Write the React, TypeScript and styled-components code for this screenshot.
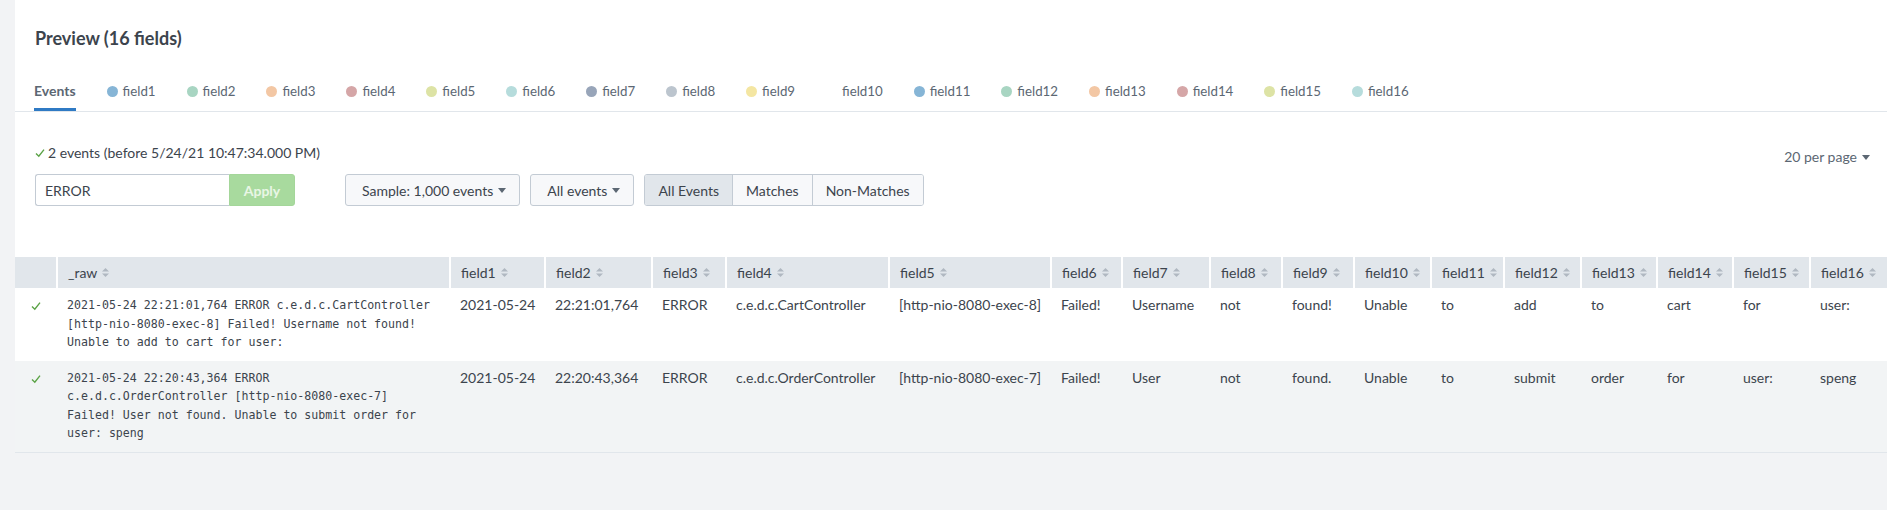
import React from "react";
import styled, { createGlobalStyle } from "styled-components";

const GlobalStyle = createGlobalStyle`
  html, body {
    margin: 0;
    padding: 0;
    background: #f2f3f5;
    font-family: Lato, "Open Sans", Arial, sans-serif;
    color: #3c444d;
  }
  * { box-sizing: border-box; }
`;

const Page = styled.div`
  min-height: 510px;
  background: #f2f3f5;
`;

const Panel = styled.div`
  margin-left: 15px;
  background: #ffffff;
`;

const Title = styled.h2`
  margin: 0;
  padding: 26px 20px 0;
  font-size: 18px;
  line-height: 24px;
  font-weight: 700;
  color: #3c444d;
`;

const TabBar = styled.div`
  display: flex;
  gap: 31px;
  margin-top: 31px;
  padding: 0 19px;
  border-bottom: 1px solid #e1e6eb;
`;

const Tab = styled.div<{ $active?: boolean }>`
  display: flex;
  align-items: center;
  gap: 5px;
  height: 30px;
  padding-bottom: 7px;
  font-size: ${(p) => (p.$active ? "14px" : "13.3px")};
  font-weight: ${(p) => (p.$active ? 700 : 400)};
  line-height: 20px;
  color: #5c6773;
  border-bottom: 3px solid ${(p) => (p.$active ? "#2f7ac4" : "transparent")};
`;

const Dot = styled.span<{ $color: string }>`
  width: 11px;
  height: 11px;
  border-radius: 50%;
  background: ${(p) => p.$color};
  flex: none;
`;

const Body = styled.div`
  padding: 31px 17px 0 20px;
`;

const StatusRow = styled.div`
  display: flex;
  justify-content: space-between;
  align-items: flex-start;
  height: 20px;
`;

const Status = styled.div`
  display: flex;
  align-items: center;
  gap: 3px;
  font-size: 14px;
  line-height: 20px;
  color: #3c444d;
`;

const PerPage = styled.div`
  display: flex;
  align-items: center;
  gap: 5px;
  margin-top: 4px;
  font-size: 14px;
  line-height: 20px;
  color: #5c6773;
`;

const Toolbar = styled.div`
  display: flex;
  align-items: center;
  margin-top: 11px;
  height: 32px;
`;

const SearchGroup = styled.div`
  display: flex;
  height: 32px;
  margin-right: 50px;
`;

const SearchInput = styled.input`
  width: 194px;
  height: 32px;
  border: 1px solid #c3cbd4;
  border-right: none;
  border-radius: 3px 0 0 3px;
  padding: 0 9px;
  font-family: inherit;
  font-size: 14px;
  color: #3c444d;
  background: #fff;
  outline: none;
`;

const ApplyButton = styled.button`
  width: 66px;
  height: 32px;
  border: 1px solid #a4d69a;
  border-radius: 0 3px 3px 0;
  background: #a8da9e;
  color: #e9f6e5;
  font-family: inherit;
  font-size: 14px;
  font-weight: 700;
  padding: 0;
`;

const DropButton = styled.button`
  display: flex;
  align-items: center;
  gap: 5px;
  height: 32px;
  margin-right: 10px;
  padding: 0 13px 0 16px;
  border: 1px solid #c3cbd4;
  border-radius: 3px;
  background: #f7f8fa;
  color: #3c444d;
  font-family: inherit;
  font-size: 14px;
`;

const Segmented = styled.div`
  display: flex;
  height: 32px;
  border: 1px solid #c3cbd4;
  border-radius: 3px;
  overflow: hidden;
`;

const SegButton = styled.button<{ $active?: boolean }>`
  height: 30px;
  padding: 0 13px;
  border: none;
  border-left: 1px solid #c3cbd4;
  background: ${(p) => (p.$active ? "#e1e6eb" : "#f7f8fa")};
  color: #3c444d;
  font-family: inherit;
  font-size: 14px;
  &:first-child { border-left: none; }
`;

const TableWrap = styled.div`
  margin-top: 51px;
`;

const Table = styled.table`
  width: 100%;
  border-collapse: collapse;
  table-layout: fixed;
`;

const Col = styled.col<{ $width: number }>`
  width: ${(p) => p.$width}px;
`;

const Th = styled.th`
  height: 31px;
  padding: 0 10px;
  background: #e1e6eb;
  border-left: 2px solid #ffffff;
  text-align: left;
  font-size: 14px;
  font-weight: 400;
  color: #3c444d;
  white-space: nowrap;
  &:first-child { border-left: none; }
`;

const HeadLabel = styled.span`
  display: inline-flex;
  align-items: center;
  gap: 5px;
`;

const Row = styled.tr<{ $alt?: boolean }>`
  background: ${(p) => (p.$alt ? "#f2f4f5" : "#ffffff")};
  &:last-child { border-bottom: 1px solid #e1e6eb; }
`;

const Td = styled.td`
  vertical-align: top;
  padding: 8px 10px 9px;
  font-size: 14px;
  line-height: 18.5px;
  color: #3c444d;
  white-space: nowrap;
`;

const CheckCell = styled.td`
  vertical-align: top;
  padding: 8px 0 0;
  text-align: center;
  line-height: 18.5px;
`;

const RawCell = styled.td`
  vertical-align: top;
  padding: 8px 10px 9px;
`;

const RawText = styled.div`
  max-width: 52.5ch;
  font-family: "DejaVu Sans Mono", "Liberation Mono", monospace;
  font-size: 11.6px;
  line-height: 18.5px;
  color: #3c444d;
  white-space: normal;
  word-break: normal;
`;

const Caret = () => (
  <svg width="8" height="5" viewBox="0 0 8 5" aria-hidden>
    <path d="M0 0 L8 0 L4 5 Z" fill="#5c6773" />
  </svg>
);

const SortIcon = () => (
  <svg width="7" height="9" viewBox="0 0 7 9" aria-hidden>
    <path d="M0 3.6 L3.5 0 L7 3.6 Z" fill="#b0b8c1" />
    <path d="M0 5.4 L3.5 9 L7 5.4 Z" fill="#b0b8c1" />
  </svg>
);

const CheckMark = ({ size = 10 }: { size?: number }) => (
  <svg width={size} height={size} viewBox="0 0 10 10" aria-hidden>
    <path d="M1 5.6 L3.8 8.2 L9 1.6" fill="none" stroke="#5ba346" strokeWidth="1.4" />
  </svg>
);

const fieldColors = [
  "#86b5d6",
  "#a8d5c2",
  "#f3c7a4",
  "#d5a6a7",
  "#dde3a5",
  "#b6dcdc",
  "#98a5b9",
  "#bcc5ce",
  "#f4e6a2",
  "transparent",
  "#86b5d6",
  "#a8d5c2",
  "#f3c7a4",
  "#d5a6a7",
  "#dde3a5",
  "#b6dcdc",
];

const colWidths = [42, 393, 95, 107, 74, 163, 162, 71, 88, 72, 72, 77, 73, 77, 76, 76, 77, 77];

const rows = [
  {
    raw: "2021-05-24 22:21:01,764 ERROR c.e.d.c.CartController [http-nio-8080-exec-8] Failed! Username not found! Unable to add to cart for user:",
    fields: [
      "2021-05-24",
      "22:21:01,764",
      "ERROR",
      "c.e.d.c.CartController",
      "[http-nio-8080-exec-8]",
      "Failed!",
      "Username",
      "not",
      "found!",
      "Unable",
      "to",
      "add",
      "to",
      "cart",
      "for",
      "user:",
    ],
  },
  {
    raw: "2021-05-24 22:20:43,364 ERROR c.e.d.c.OrderController [http-nio-8080-exec-7] Failed! User not found. Unable to submit order for user: speng",
    fields: [
      "2021-05-24",
      "22:20:43,364",
      "ERROR",
      "c.e.d.c.OrderController",
      "[http-nio-8080-exec-7]",
      "Failed!",
      "User",
      "not",
      "found.",
      "Unable",
      "to",
      "submit",
      "order",
      "for",
      "user:",
      "speng",
    ],
  },
];

const fieldNames = fieldColors.map((_, i) => `field${i + 1}`);

export default function App() {
  return (
    <>
      <GlobalStyle />
      <Page>
        <Panel>
          <Title>Preview (16 fields)</Title>
          <TabBar>
            <Tab $active>Events</Tab>
            {fieldNames.map((name, i) => (
              <Tab key={name}>
                <Dot $color={fieldColors[i]} />
                {name}
              </Tab>
            ))}
          </TabBar>
          <Body>
            <StatusRow>
              <Status>
                <CheckMark />
                2 events (before 5/24/21 10:47:34.000 PM)
              </Status>
              <PerPage>
                20 per page <Caret />
              </PerPage>
            </StatusRow>
            <Toolbar>
              <SearchGroup>
                <SearchInput value="ERROR" readOnly />
                <ApplyButton>Apply</ApplyButton>
              </SearchGroup>
              <DropButton>
                Sample: 1,000 events <Caret />
              </DropButton>
              <DropButton>
                All events <Caret />
              </DropButton>
              <Segmented>
                <SegButton $active>All Events</SegButton>
                <SegButton>Matches</SegButton>
                <SegButton>Non-Matches</SegButton>
              </Segmented>
            </Toolbar>
          </Body>
          <TableWrap>
            <Table>
              <colgroup>
                {colWidths.map((w, i) => (
                  <Col key={i} $width={w} />
                ))}
              </colgroup>
              <thead>
                <tr>
                  <Th />
                  <Th>
                    <HeadLabel>
                      _raw <SortIcon />
                    </HeadLabel>
                  </Th>
                  {fieldNames.map((name) => (
                    <Th key={name}>
                      <HeadLabel>
                        {name} <SortIcon />
                      </HeadLabel>
                    </Th>
                  ))}
                </tr>
              </thead>
              <tbody>
                {rows.map((r, ri) => (
                  <Row key={ri} $alt={ri % 2 === 1}>
                    <CheckCell>
                      <CheckMark />
                    </CheckCell>
                    <RawCell>
                      <RawText>{r.raw}</RawText>
                    </RawCell>
                    {r.fields.map((f, fi) => (
                      <Td key={fi}>{f}</Td>
                    ))}
                  </Row>
                ))}
              </tbody>
            </Table>
          </TableWrap>
        </Panel>
      </Page>
    </>
  );
}
